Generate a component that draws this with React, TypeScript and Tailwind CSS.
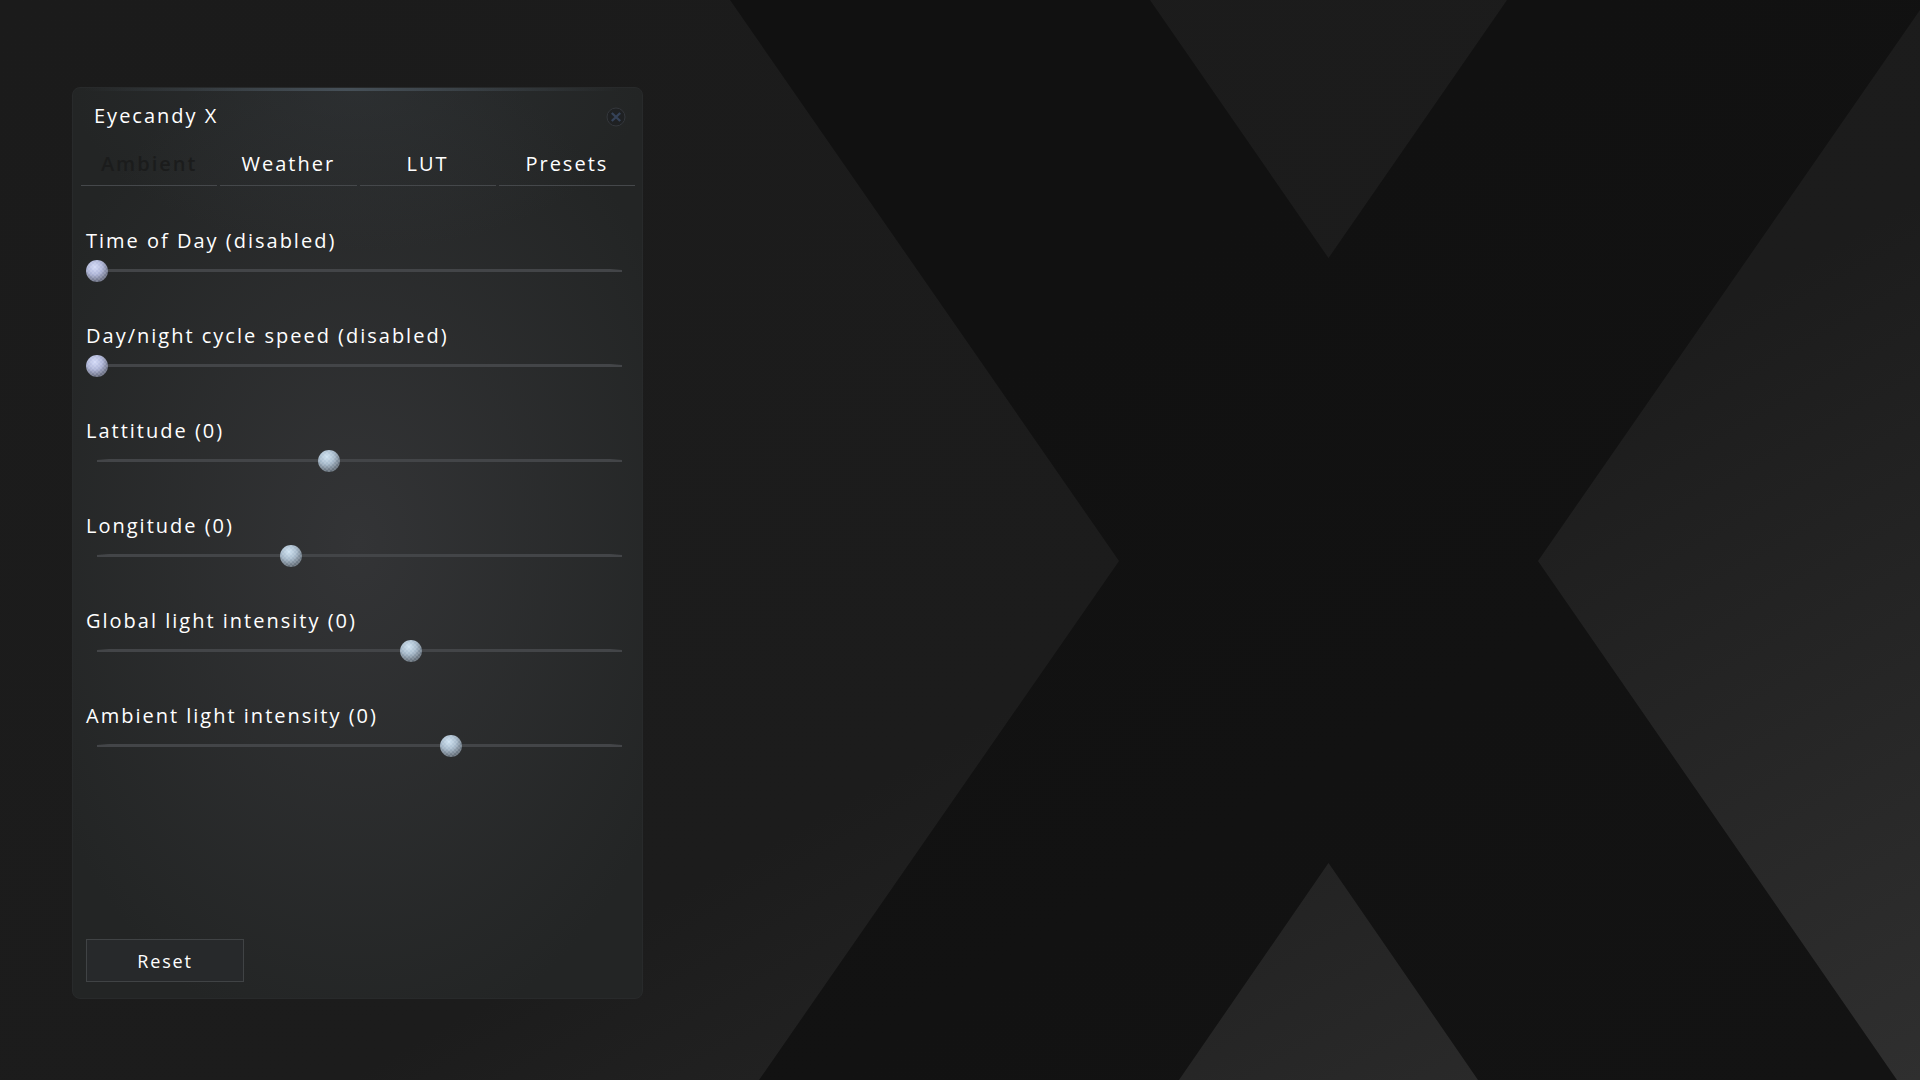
import { useState } from 'react';

type SliderSpec = { id: string; label: string; start: number; cool?: boolean };

const SLIDERS: SliderSpec[] = [
  { id: 'time', label: 'Time of Day (disabled)', start: 0, cool: true },
  { id: 'cycle', label: 'Day/night cycle speed (disabled)', start: 0, cool: true },
  { id: 'latitude', label: 'Lattitude (0)', start: 44.2 },
  { id: 'longitude', label: 'Longitude (0)', start: 37 },
  { id: 'global', label: 'Global light intensity (0)', start: 59.8 },
  { id: 'ambient', label: 'Ambient light intensity (0)', start: 67.5 },
];

const TABS = ['Ambient', 'Weather', 'LUT', 'Presets'];

function Backdrop() {
  return (
    <svg
      aria-hidden="true"
      className="pointer-events-none absolute inset-0 h-full w-full"
      viewBox="0 0 1920 1080"
      preserveAspectRatio="xMaxYMid slice"
    >
      <defs>
        <linearGradient id="cross" gradientUnits="userSpaceOnUse" x1="1100" y1="300" x2="1640" y2="1200">
          <stop offset="0" stopColor="#111111" />
          <stop offset="1" stopColor="#131313" />
        </linearGradient>
      </defs>
      <path
        fill="url(#cross)"
        d="M730 0H1150L1328.5 258L1507 0H1927L1538 561L1897 1080H1478L1328.5 863L1179 1080H759L1119 561Z"
      />
    </svg>
  );
}

function Slider({ id, label, start, cool }: SliderSpec) {
  const [value, setValue] = useState(start);
  return (
    <div className="flex flex-col">
      <label htmlFor={id} className="h-7 text-[20px] leading-7 font-medium tracking-widest whitespace-nowrap">
        {label}
      </label>
      <input
        id={id}
        type="range"
        min={0}
        max={100}
        step={0.1}
        value={value}
        onChange={(e) => setValue(Number(e.target.value))}
        className={`${
          cool
            ? '[&::-webkit-slider-thumb]:bg-[repeating-conic-gradient(#ffffff1f_0_25%,transparent_0_50%),radial-gradient(circle_at_40%_32%,#d3daf8_0%,#adb4d6_38%,#757a90_66%,#3f424b_100%)]'
            : '[&::-webkit-slider-thumb]:bg-[repeating-conic-gradient(#ffffff1f_0_25%,transparent_0_50%),radial-gradient(circle_at_40%_30%,#cfe3f2_0%,#a5b8c9_38%,#6f7b87_66%,#3f454b_100%)]'
        } h-8 w-full cursor-pointer appearance-none bg-[linear-gradient(90deg,transparent,#434548_12px,#434548_calc(100%-12px),transparent),linear-gradient(#434548,#434548)] bg-[length:calc(100%-22px)_3px,calc(100%-22px)_2px] bg-[position:center_14px,center_15px] bg-no-repeat [&::-webkit-slider-thumb]:size-[22px] [&::-webkit-slider-thumb]:appearance-none [&::-webkit-slider-thumb]:rounded-full [&::-webkit-slider-thumb]:bg-[length:4px_4px,100%_100%]`}
      />
    </div>
  );
}

export default function App() {
  const [tab, setTab] = useState('Ambient');
  return (
    <main className="relative flex min-h-screen overflow-hidden bg-[linear-gradient(to_bottom_right,#1b1b1b_0%,#1c1c1c_59%,#2f2f2f_100%)] px-[72px] pt-[87px] pb-[81px] font-['Open_Sans',sans-serif] text-white">
      <Backdrop />
      <section
        aria-label="Eyecandy X"
        className="relative flex w-[571px] max-w-full flex-col rounded-lg border border-[#282a2b] bg-[radial-gradient(ellipse_50%_18%_at_50%_0%,#3a3f4455,transparent),radial-gradient(ellipse_62%_56%_at_50%_50%,#333436,#232525)]"
      >
        <div className="absolute inset-x-0 top-0 h-[3px] rounded-t-lg bg-[linear-gradient(90deg,transparent_2%,#465058_48%,transparent_96%)]" />
        <header className="flex h-14 items-center justify-between pr-4 pl-[21px]">
          <h1 className="text-[20px] leading-7 font-medium tracking-widest">Eyecandy X</h1>
          <button type="button" aria-label="Close" className="mt-0.5 cursor-pointer">
            <svg className="size-5" viewBox="0 0 20 20" fill="none">
              <circle cx="10" cy="10" r="9" fill="#1f2123" stroke="#34373c" />
              <path d="M5.8 6L14.2 14M14.2 6L5.8 14" stroke="#354258" strokeWidth="2.4" />
            </svg>
          </button>
        </header>
        <nav className="grid grid-cols-4 gap-[3px] pt-0.5 pr-[7px] pl-2">
          {TABS.map((name) => (
            <button
              key={name}
              type="button"
              aria-pressed={tab === name}
              onClick={() => setTab(name)}
              className={`${
                tab === name ? 'font-semibold text-[#1b1c1c]' : 'font-medium text-white'
              } h-10 cursor-pointer border-b border-[#45484b] pb-1 text-[20px] leading-7 tracking-widest`}
            >
              {name}
            </button>
          ))}
        </nav>
        <div className="flex flex-1 flex-col gap-[35px] pt-[41px] pr-[9px] pl-[13px]">
          {SLIDERS.map((s) => (
            <Slider key={s.id} {...s} />
          ))}
        </div>
        <footer className="px-[13px] pb-4">
          <button
            type="button"
            className="h-[43px] w-[158px] cursor-pointer border border-[#404345] bg-[#27292b] text-[18px] leading-6 tracking-widest"
          >
            Reset
          </button>
        </footer>
      </section>
    </main>
  );
}
